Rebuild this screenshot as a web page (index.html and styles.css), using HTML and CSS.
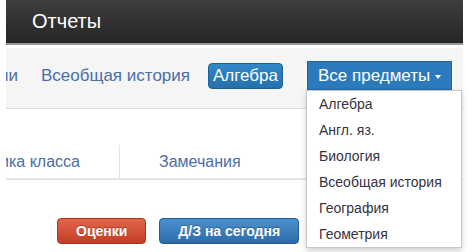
FILE: index.html
```html
<!DOCTYPE html>
<html lang="ru">
<head>
<meta charset="utf-8">
<title>Отчеты</title>
<link rel="stylesheet" href="styles.css">
</head>
<body>
<div class="page">
  <header class="topbar">
    <h1 class="title">Отчеты</h1>
  </header>
  <nav class="subjects">
    <div class="subject-list">
      <a class="subject" href="#">Технологии</a>
      <a class="subject" href="#">Всеобщая история</a>
      <a class="subject active" href="#">Алгебра</a>
    </div>
    <div class="dropdown">
      <button class="dd-toggle" type="button">Все предметы <span class="caret"></span></button>
      <ul class="dd-menu">
        <li>Алгебра</li>
        <li>Англ. яз.</li>
        <li>Биология</li>
        <li>Всеобщая история</li>
        <li>География</li>
        <li>Геометрия</li>
      </ul>
    </div>
  </nav>
  <div class="tabs">
    <div class="tab tab-first"><span>Характеристика класса</span></div>
    <div class="tab">Замечания</div>
  </div>
  <div class="actions">
    <button class="btn btn-red" type="button">Оценки</button>
    <button class="btn btn-blue" type="button">Д/З на сегодня</button>
  </div>
</div>
</body>
</html>
```
FILE: styles.css
```css
html, body {
  margin: 0;
  padding: 0;
  background: #ffffff;
}
body {
  font-family: "Liberation Sans", Arial, sans-serif;
  width: 472px;
  height: 252px;
  overflow: hidden;
}
.page {
  margin-left: 6px;
  width: 457px;
}
.topbar {
  height: 43px;
  background: linear-gradient(#3e3e3e, #252525);
  border-bottom: 2px solid #9a9a9a;
  padding-left: 26px;
  display: flex;
  align-items: center;
}
.title {
  margin: 0;
  font-size: 20px;
  font-weight: normal;
  color: #ffffff;
  padding-bottom: 1px;
}
.subjects {
  margin-top: 3px;
  height: 47px;
  padding-top: 13px;
  padding-right: 11px;
  background: #f5f5f5;
  border-bottom: 1px solid #dadada;
  display: flex;
  align-items: flex-start;
}
.subject-list {
  flex: 1 1 auto;
  min-width: 0;
  overflow: hidden;
  height: 29px;
  display: flex;
  justify-content: flex-end;
  align-items: center;
  gap: 13px;
}
.subject {
  flex: none;
  padding: 0 5px;
  font-size: 17px;
  color: #4a6ea8;
  text-decoration: none;
  white-space: nowrap;
  line-height: 24px;
}
.subject.active {
  padding: 0 4px;
  background: linear-gradient(#3187c8, #2470ad);
  border: 1px solid #1f6196;
  border-radius: 4px;
  color: #ffffff;
}
.dropdown {
  position: relative;
  flex: none;
  margin-left: 24px;
}
.dd-toggle {
  display: flex;
  align-items: center;
  width: 145px;
  height: 29px;
  padding: 0 0 0 10px;
  margin: 0;
  border: 1px solid #20669e;
  background: #2b7bbc;
  color: #ffffff;
  font-family: "Liberation Sans", Arial, sans-serif;
  font-size: 17px;
  cursor: pointer;
}
.caret {
  display: inline-block;
  margin-left: 5px;
  margin-top: 2px;
  width: 0;
  height: 0;
  border-left: 3px solid transparent;
  border-right: 3px solid transparent;
  border-top: 4px solid #ffffff;
}
.dd-menu {
  position: absolute;
  left: -1px;
  top: 29px;
  width: 154px;
  margin: 0;
  padding: 0;
  list-style: none;
  background: #ffffff;
  border: 1px solid #c8c8c8;
  box-shadow: 0 3px 6px rgba(0, 0, 0, 0.18);
  z-index: 5;
}
.dd-menu li {
  height: 26px;
  line-height: 26px;
  padding-left: 12px;
  font-size: 14px;
  color: #35333f;
  white-space: nowrap;
}
.tabs {
  margin-top: 36px;
  height: 33px;
  border-bottom: 2px solid #e3e3e3;
  display: flex;
}
.tab {
  flex: none;
  display: flex;
  align-items: center;
  padding-left: 39px;
  font-size: 16px;
  color: #4a6ea8;
  white-space: nowrap;
}
.tab-first {
  width: 74px;
  padding-left: 0;
  padding-right: 39px;
  overflow: hidden;
  justify-content: flex-end;
  border-right: 1px solid #e3e3e3;
}
.tab-first span {
  flex: none;
}
.actions {
  margin-top: 38px;
  padding-left: 51px;
  display: flex;
  gap: 13px;
}
.btn {
  height: 26px;
  padding: 0 18px;
  margin: 0;
  border-radius: 4px;
  font-family: "Liberation Sans", Arial, sans-serif;
  font-size: 14px;
  font-weight: bold;
  color: #ffffff;
  text-shadow: 0 -1px 0 rgba(0, 0, 0, 0.3);
  cursor: pointer;
}
.btn-red {
  background: linear-gradient(#e2664a, #c23d26);
  border: 1px solid #a8341f;
}
.btn-blue {
  background: linear-gradient(#4b91cf, #2c6ba9);
  border: 1px solid #245b91;
}
```
